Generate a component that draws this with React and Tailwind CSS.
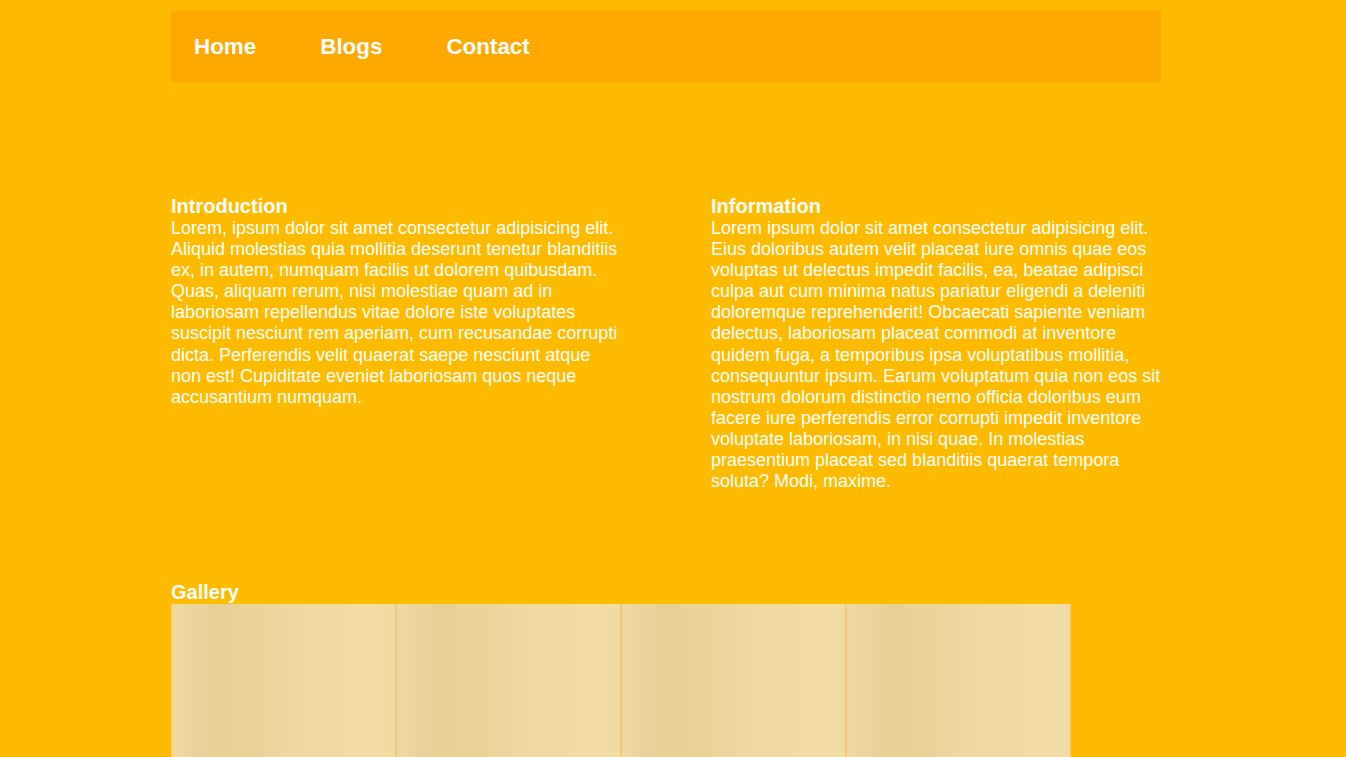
export default function App() {
  const intro =
    "Lorem, ipsum dolor sit amet consectetur adipisicing elit. Aliquid molestias quia mollitia deserunt tenetur blanditiis ex, in autem, numquam facilis ut dolorem quibusdam. Quas, aliquam rerum, nisi molestiae quam ad in laboriosam repellendus vitae dolore iste voluptates suscipit nesciunt rem aperiam, cum recusandae corrupti dicta. Perferendis velit quaerat saepe nesciunt atque non est! Cupiditate eveniet laboriosam quos neque accusantium numquam.";
  const info =
    "Lorem ipsum dolor sit amet consectetur adipisicing elit. Eius doloribus autem velit placeat iure omnis quae eos voluptas ut delectus impedit facilis, ea, beatae adipisci culpa aut cum minima natus pariatur eligendi a deleniti doloremque reprehenderit! Obcaecati sapiente veniam delectus, laboriosam placeat commodi at inventore quidem fuga, a temporibus ipsa voluptatibus mollitia, consequuntur ipsum. Earum voluptatum quia non eos sit nostrum dolorum distinctio nemo officia doloribus eum facere iure perferendis error corrupti impedit inventore voluptate laboriosam, in nisi quae. In molestias praesentium placeat sed blanditiis quaerat tempora soluta? Modi, maxime.";

  return (
    <div className="min-h-screen bg-[#ffbb00] text-white font-['Liberation_Sans',Arial,sans-serif]">
      <div className="ml-[171px] w-[990px] pt-[11px] pb-10">
        {/* Nav */}
        <nav className="flex h-[71px] items-center gap-[64px] bg-[#ffa800] pl-[23px] pt-[1px]">
          <a className="text-[22.4px] font-bold">Home</a>
          <a className="text-[22.4px] font-bold">Blogs</a>
          <a className="text-[22.4px] font-bold">Contact</a>
        </nav>

        {/* Text sections */}
        <div className="mt-[113px] grid grid-cols-2 gap-x-[90px] items-start">
          <section>
            <h3 className="text-[20px] font-bold leading-[23px]">Introduction</h3>
            <p className="text-[18px] leading-[21.1px]">{intro}</p>
          </section>
          <section>
            <h3 className="text-[20px] font-bold leading-[23px]">Information</h3>
            <p className="text-[18px] leading-[21.1px]">{info}</p>
          </section>
        </div>

        {/* Gallery */}
        <section className="mt-[89px]">
          <h3 className="text-[20px] font-bold leading-[23px]">Gallery</h3>
          <div className="flex">
            {[0, 1, 2, 3].map((i) => (
              <div
                key={i}
                className="h-[300px] w-[225px] border-x border-[#efc877] bg-[linear-gradient(to_right,#eed9a2_0%,#e7d096_18%,#e9d399_35%,#eed9a0_60%,#f1dca4_85%,#f0dba3_100%)]"
              />
            ))}
          </div>
        </section>
      </div>
    </div>
  );
}
